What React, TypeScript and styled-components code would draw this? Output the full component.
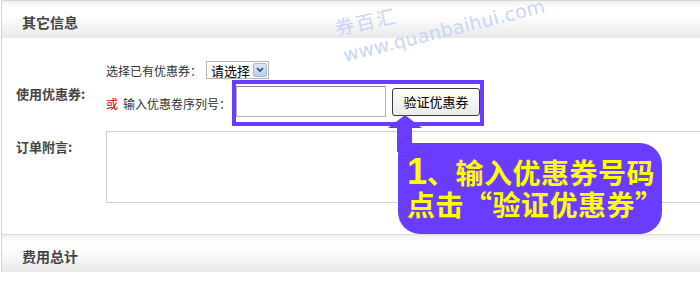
import styled, { createGlobalStyle } from 'styled-components';

const GlobalStyle = createGlobalStyle`
  html, body {
    margin: 0;
    padding: 0;
    background: #fff;
    overflow: hidden;
  }
  body {
    font-family: "Noto Sans CJK SC", "Liberation Sans", sans-serif;
    font-size: 12px;
    color: #333;
  }
`;

const Page = styled.div`
  position: relative;
  width: 700px;
  height: 306px;
  overflow: hidden;
`;

const Panel = styled.div`
  width: 760px;
  margin-left: 1px;
  border-left: 1px solid #d4d4d4;
  border-top: 1px solid #d8d8d8;
`;

const SectionHeader = styled.div`
  height: 37px;
  box-sizing: border-box;
  display: flex;
  align-items: center;
  padding: 4px 0 0 20px;
  background: linear-gradient(to bottom, #f0f0f0 0%, #fff 18%, #fff 38%, #e9e9e9 100%);
  font-size: 14px;
  font-weight: 700;
  color: #444;
`;

const SectionBody = styled.div`
  display: flex;
  flex-direction: column;
  gap: 5px;
  padding: 22px 0 31px;
  border-bottom: 1px solid #dcdcdc;
`;

const Row = styled.div<{ $top?: boolean }>`
  display: grid;
  grid-template-columns: 104px 1fr;
  align-items: ${(p) => (p.$top ? 'start' : 'center')};
`;

const Label = styled.div<{ $pt?: number }>`
  padding-left: 14px;
  padding-top: ${(p) => p.$pt ?? 0}px;
  font-size: 13px;
  font-weight: 700;
  color: #444;
`;

const Field = styled.div`
  display: flex;
  flex-direction: column;
`;

const Line = styled.div<{ $h?: number }>`
  display: flex;
  align-items: center;
  height: ${(p) => (p.$h ? `${p.$h}px` : 'auto')};
  white-space: nowrap;
`;

const Text = styled.span`
  font-size: 12px;
  color: #333;
`;

const Or = styled.span`
  font-size: 12px;
  color: #c00;
  margin-right: 5px;
`;

const Select = styled.div`
  margin-left: 4px;
  width: 56px;
  height: 16px;
  border: 1px solid #b5b5b5;
  display: flex;
  align-items: center;
  justify-content: space-between;
  padding-left: 4px;
  padding-right: 1px;
  font-size: 13px;
  color: #000;
  background: #fff;
`;

const SelectBtn = styled.div`
  width: 14px;
  height: 14px;
  border-radius: 2px;
  background: linear-gradient(to bottom, #dfe8f7, #b9cbed);
  border: 1px solid #a6b8dc;
  box-sizing: border-box;
  display: flex;
  align-items: center;
  justify-content: center;
`;

const Frame = styled.div`
  margin-left: 1px;
  display: flex;
  align-items: center;
  gap: 6px;
  padding: 2px 0 5px 0;
  border: 4px solid #6a3cff;
`;

const Input = styled.div`
  width: 148px;
  height: 29px;
  border: 1px solid #b0b0b0;
  border-top-color: #8c8c8c;
  background: #fff;
`;

const Button = styled.div`
  width: 86px;
  height: 26px;
  border: 1px solid #3a3a3a;
  border-radius: 3px;
  background: linear-gradient(to bottom, #fdfdfd, #ebebe6);
  display: flex;
  align-items: center;
  justify-content: center;
  font-size: 13px;
  color: #000;
`;

const TextArea = styled.div`
  width: 640px;
  height: 70px;
  border: 1px solid #cfcfcf;
  background: #fff;
`;

const WmBrand = styled.div`
  position: absolute;
  left: 333px;
  top: 18px;
  transform: rotate(-12deg);
  transform-origin: left top;
  color: #c9d5f6;
  pointer-events: none;
  font-size: 19px;
  line-height: 1;
  letter-spacing: 2px;
`;

const WmUrl = styled.div`
  position: absolute;
  left: 346px;
  top: 44px;
  transform: rotate(-14deg);
  transform-origin: left bottom;
  color: #c9d5f6;
  pointer-events: none;
  font-family: "DejaVu Sans", "Liberation Sans", sans-serif;
  font-size: 19px;
  line-height: 22px;
  letter-spacing: 0.2px;
  white-space: nowrap;
`;

const Arrow = styled.svg`
  position: absolute;
  left: 386px;
  top: 112px;
`;

const Callout = styled.div`
  position: absolute;
  left: 398px;
  top: 143px;
  width: 264px;
  height: 91px;
  box-sizing: border-box;
  padding: 13px 0 0 9px;
  border-radius: 12px 22px 22px 22px;
  background: #6a3cff;
  color: #ffff00;
  font-weight: 700;
  font-size: 28px;
  line-height: 32px;
  letter-spacing: 0.5px;
  white-space: nowrap;
`;

const CalloutLine = styled.div`
  height: 32px;
`;

const Big = styled.span`
  font-family: "Liberation Sans", sans-serif;
  font-size: 36px;
  line-height: 32px;
  letter-spacing: 0;
`;

export default function App() {
  return (
    <Page>
      <GlobalStyle />
      <Panel>
        <SectionHeader>其它信息</SectionHeader>
        <SectionBody>
          <Row>
            <Label>使用优惠券:</Label>
            <Field>
              <Line $h={20}>
                <Text>选择已有优惠券：</Text>
                <Select>
                  请选择
                  <SelectBtn>
                    <svg width="8" height="6" viewBox="0 0 8 6">
                      <path d="M1 1 L4 4 L7 1" fill="none" stroke="#2b3f6b" strokeWidth="1.6" />
                    </svg>
                  </SelectBtn>
                </Select>
              </Line>
              <Line>
                <Or>或</Or>
                <Text>输入优惠卷序列号：</Text>
                <Frame>
                  <Input />
                  <Button>验证优惠券</Button>
                </Frame>
              </Line>
            </Field>
          </Row>
          <Row $top>
            <Label $pt={6}>订单附言:</Label>
            <TextArea />
          </Row>
        </SectionBody>
        <SectionHeader>费用总计</SectionHeader>
      </Panel>

      <WmBrand>券百汇</WmBrand>
      <WmUrl>www.quanbaihui.com</WmUrl>

      <Arrow width="38" height="40" viewBox="0 0 38 40">
        <polygon points="19,3 36,16 26,16 26,40 11,40 11,16 2,16" fill="#6a3cff" />
      </Arrow>
      <Callout>
        <CalloutLine>
          <Big>1</Big>、输入优惠券号码
        </CalloutLine>
        <CalloutLine>点击“验证优惠券”</CalloutLine>
      </Callout>
    </Page>
  );
}
